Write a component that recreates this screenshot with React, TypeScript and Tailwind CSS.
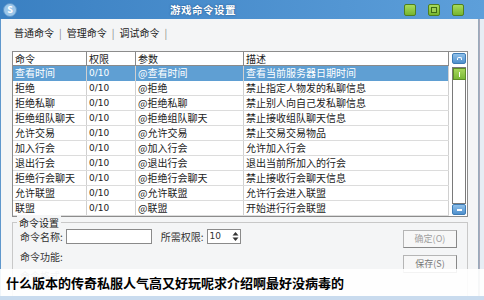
import React from "react";

const rows = [
  ["查看时间", "0/10", "@查看时间", "查看当前服务器日期时间"],
  ["拒绝", "0/10", "@拒绝", "禁止指定人物发的私聊信息"],
  ["拒绝私聊", "0/10", "@拒绝私聊", "禁止别人向自己发私聊信息"],
  ["拒绝组队聊天", "0/10", "@拒绝组队聊天", "禁止接收组队聊天信息"],
  ["允许交易", "0/10", "@允许交易", "禁止交易交易物品"],
  ["加入行会", "0/10", "@加入行会", "允许加入行会"],
  ["退出行会", "0/10", "@退出行会", "退出当前所加入的行会"],
  ["拒绝行会聊天", "0/10", "@拒绝行会聊天", "禁止接收行会聊天信息"],
  ["允许联盟", "0/10", "@允许联盟", "允许行会进入联盟"],
  ["联盟", "0/10", "@联盟", "开始进行行会联盟"],
];

const font = { fontFamily: '"Noto Sans CJK SC", "Noto Sans", sans-serif' };

function GreenBtn({ inner }: { inner?: boolean }) {
  return (
    <div className="w-[12px] h-[12px] rounded-[2px] border border-[#4f7f1f] bg-gradient-to-b from-[#a8dc5c] to-[#76b52e] flex items-center justify-center">
      {inner && <div className="w-[6px] h-[6px] border border-[#3d6a14] bg-[#9ccf55]" />}
    </div>
  );
}

export default function App() {
  return (
    <div className="w-[484px] h-[300px] relative overflow-hidden bg-[#c9dbee] text-[10px] text-[#222]" style={font}>
      {/* title bar */}
      <div className="h-[19px] flex items-center bg-gradient-to-r from-[#3a80c2] to-[#5d9fda] pr-[14px]">
        <div className="ml-[3px] w-[14px] h-[14px] rounded-full bg-[#9cc7ea] border border-[#5c95c9] flex items-center justify-center text-[9px] font-bold text-white leading-none">S</div>
        <div className="flex-1 flex pl-[153px]">
          <span className="text-[10.5px] font-bold text-white tracking-[0.5px]" style={{ textShadow: "0 0 2px #1d4c80" }}>游戏命令设置</span>
        </div>
        <div className="flex gap-[12px] mr-[6px]">
          <GreenBtn />
          <GreenBtn inner />
          <GreenBtn />
        </div>
      </div>
      {/* body */}
      <div className="h-[277px] flex">
        <div className="w-[3px] bg-[#5f97cc]" />
        <div className="flex-1 bg-[#f4f5f6] flex flex-col pl-[11px] pr-[10px] border-r border-[#9ab] ">
          {/* tabs */}
          <div className="h-[25px] flex items-center gap-[5px] pl-[2px] pt-[2px] text-[10px]">
            <span>普通命令</span>
            <span className="text-[#888]">|</span>
            <span>管理命令</span>
            <span className="text-[#888]">|</span>
            <span>调试命令</span>
            <span className="text-[#888]">|</span>
          </div>
          {/* table */}
          <div className="mt-[7px] flex border border-[#8c8c8c] bg-white h-[166px] w-[456px]">
            <div className="flex flex-col w-[437px]">
              <div className="h-[14px] flex border-b border-[#8a8a8a] leading-[13px]">
                <div className="w-[74px] border-r border-[#8a8a8a] pl-[2px]">命令</div>
                <div className="w-[49px] border-r border-[#8a8a8a] pl-[2px]">权限</div>
                <div className="w-[108px] border-r border-[#8a8a8a] pl-[2px]">参数</div>
                <div className="flex-1 border-r border-[#8a8a8a] pl-[2px]">描述</div>
              </div>
              {rows.map((r, i) => (
                <div
                  key={i}
                  className={
                    i === 0
                      ? "h-[15px] flex bg-[#5f9fd3] text-white leading-[14px]"
                      : "h-[15px] flex border-b border-[#dcdcdc] leading-[14px]"
                  }
                >
                  <div className="w-[74px] border-r border-[#d0d0d0] pl-[2px] whitespace-nowrap">{r[0]}</div>
                  <div className="w-[49px] border-r border-[#d0d0d0] pl-[2px]" style={{ fontFamily: '"DejaVu Sans", sans-serif', fontSize: "9px" }}>{r[1]}</div>
                  <div className="w-[108px] border-r border-[#d0d0d0] pl-[2px] whitespace-nowrap">{r[2]}</div>
                  <div className="flex-1 border-r border-[#d0d0d0] pl-[2px] whitespace-nowrap">{r[3]}</div>
                </div>
              ))}
            </div>
            {/* scrollbar */}
            <div className="flex-1 flex flex-col items-center py-[1px] pl-[3px] pr-[1px]">
              <div className="w-[14px] h-[11px] rounded-[2px] border border-[#3e7cb5] bg-gradient-to-b from-[#8fc0ea] to-[#4f90cc] flex items-center justify-center">
                <div className="w-[5px] h-[3px] border-t border-l border-r border-white rounded-t-[2px]" />
              </div>
              <div className="w-[14px] flex-1 border border-[#7a7a7a] bg-white mt-[3px] flex flex-col items-center">
                <div className="w-[13px] h-[12px] bg-gradient-to-b from-[#a8d75c] to-[#7ab936] border border-[#5d8c28] flex items-center justify-center">
                  <div className="w-[1px] h-[5px] bg-white" />
                </div>
              </div>
              <div className="w-[14px] h-[11px] rounded-[2px] border border-[#3e7cb5] bg-gradient-to-b from-[#8fc0ea] to-[#4f90cc] flex items-center justify-center">
                <div className="w-[5px] h-[2px] bg-white" />
              </div>
            </div>
          </div>
          {/* group box */}
          <div className="relative mt-[5px] flex-1 border border-b-0 border-[#c8c8c8] w-[456px] pl-[7px] pr-[10px] pt-[6px]">
            <div className="absolute -top-[8px] left-[4px] bg-[#f4f5f6] px-[2px] text-[10px]">命令设置</div>
            <div className="flex items-start">
              <div className="flex-1 flex flex-col">
                <div className="flex items-center h-[15px] gap-[3px] text-[#333]">
                  <span>命令名称:</span>
                  <div className="w-[86px] h-[15px] border border-[#8a8a8a] bg-white" />
                  <span className="ml-[6px]">所需权限:</span>
                  <div className="w-[34px] h-[15px] border border-[#8a8a8a] bg-white flex items-center justify-between pl-[2px] pr-[1px]">
                    <span style={{ fontFamily: '"DejaVu Sans", sans-serif', fontSize: "9px" }}>10</span>
                    <svg width="7" height="11" viewBox="0 0 7 11">
                      <path d="M3.5 1 L6.5 4.5 L0.5 4.5 Z" fill="#333" />
                      <path d="M3.5 10 L6.5 6.5 L0.5 6.5 Z" fill="#333" />
                    </svg>
                  </div>
                </div>
                <div className="mt-[5px] h-[14px] text-[#333]">命令功能:</div>
                <div className="mt-[5px] h-[14px] text-[#888]">命令格式</div>
              </div>
              <div className="flex flex-col gap-[7px] mt-[1px]">
                <div className="w-[54px] h-[18px] border border-[#b5b5b5] border-r-[#888] border-b-[#888] bg-[#f7f7f7] flex items-center justify-center text-[#a0a0a0] text-[9px]">确定(O)</div>
                <div className="w-[54px] h-[18px] border border-[#b5b5b5] border-r-[#888] border-b-[#888] bg-[#f7f7f7] flex items-center justify-center text-[#777] text-[9px]">保存(S)</div>
              </div>
            </div>
          </div>
        </div>
        <div className="w-[13px] bg-[#e6edf4] border-l border-[#aab]" />
      </div>
      {/* caption overlay */}
      <div className="absolute left-0 right-0 top-[269px] h-[27px] bg-[rgba(255,255,255,0.9)] flex items-center pl-[6px]">
        <span className="text-[13px] font-bold text-black leading-none">什么版本的传奇私服人气高又好玩呢求介绍啊最好没病毒的</span>
      </div>
    </div>
  );
}
